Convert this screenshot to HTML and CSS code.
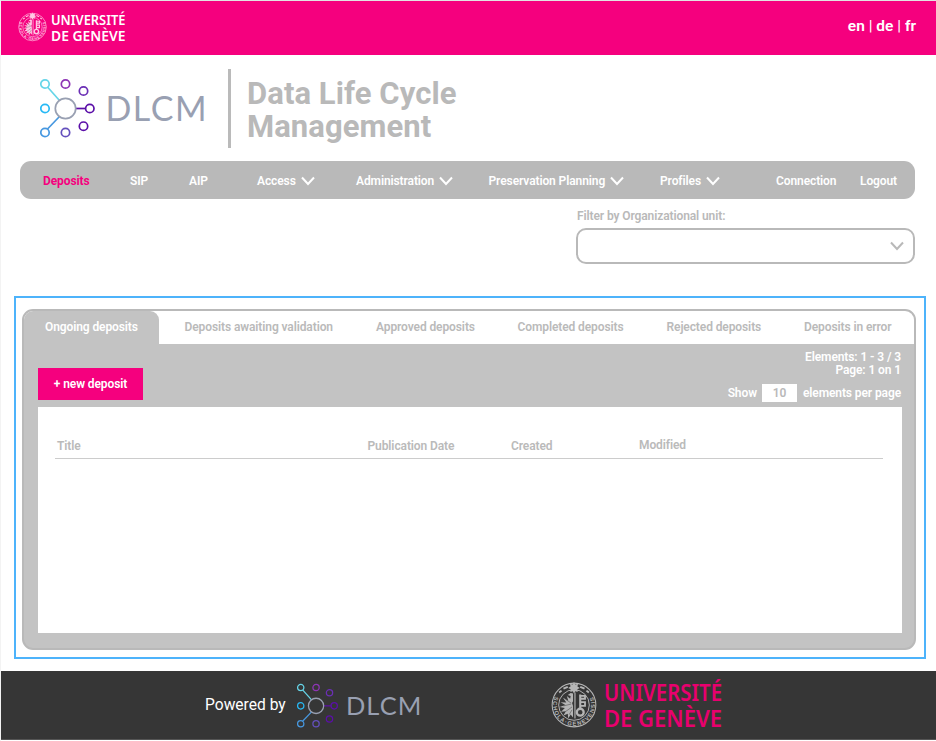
FILE: index.html
```html
<!DOCTYPE html>
<html lang="en">
<head>
<meta charset="utf-8">
<title>Data Life Cycle Management</title>
<link rel="stylesheet" href="styles.css">
</head>
<body>
<svg class="defs" width="0" height="0">
  <defs>
    <symbol id="dlcm" viewBox="0 0 170 60">
      <g fill="none" stroke-width="1.7">
        <path d="M7.500 9 19.500 22.500" stroke="#66d5e8"/>
        <path d="M7.500 51 19.500 38.500" stroke="#4798e0"/>
        <path d="M36 30.500H46" stroke="#5b0fa8"/>
        <circle cx="5" cy="6" r="4.200" stroke="#66d5e8"/>
        <circle cx="25.500" cy="6" r="4.200" stroke="#8e35b5"/>
        <circle cx="43.500" cy="13" r="4.200" stroke="#6b2fb5"/>
        <circle cx="5" cy="30.500" r="4.200" stroke="#27b9f5"/>
        <circle cx="49.800" cy="30.500" r="4.200" stroke="#5b0fa8"/>
        <circle cx="43.500" cy="48.200" r="4.200" stroke="#5b0fa8"/>
        <circle cx="5" cy="54.500" r="4.200" stroke="#4798e0"/>
        <circle cx="25.500" cy="54.500" r="4.200" stroke="#6450bd"/>
        <circle cx="25.500" cy="30.500" r="10.200" stroke="#99a0b2"/>
      </g>
      <text class="dlcm-text" x="65.500" y="43" textLength="102.500" lengthAdjust="spacingAndGlyphs">DLCM</text>
    </symbol>
    <symbol id="seal" viewBox="0 0 48 48">
      <g fill="none" stroke="currentColor">
        <circle cx="24" cy="24" r="22.800" stroke-width="1.100"/>
        <circle cx="24" cy="24" r="16" stroke-width="1"/>
        <path id="ring" d="M3.900 15A21.900 21.900 0 1 0 44.100 15" stroke="none"/>
        <path d="M13 7 17.500 5M30.500 5l4.500 2M8.500 11l2.500-2M37 9l2.500 2" stroke-width="2"/>
      </g>
      <path fill="currentColor" d="M24 0l1.300 2.500 2.900-.8-.6 2.900 2.500 1.600-2.600 1.300.3 3-2.500-.9L24 12l-1.300-2.400-2.500.9.3-3-2.600-1.300 2.500-1.600-.6-2.900 2.900.8z"/>
      <path fill="currentColor" d="M23 12v8l-1 2 1 3v12l-2.500-3-2.500 4-.5-5-4.500 2 2.500-4.500-5 .5 4-4-5.500-1 6-2-5-3 6 .5-3.500-5 5.500 3-1.500-5 3.500 3 .5-3-3-1 3-2z"/>
      <g fill="none" stroke="currentColor">
        <path d="M25 11V38" stroke-width="1.200"/>
        <path d="M30.500 13V29" stroke-width="2.200"/>
        <path d="M30 14.500h5.500v3H31M31 21h4.500v4H31" stroke-width="1.900"/>
        <circle cx="30.500" cy="31.500" r="3.600" stroke-width="2.400"/>
      </g>
      <path d="M15 18l6 4M13 25l8-2M15 31l7-5M19 34l3-5" class="seal-cut"/>
      <text class="seal-text" textLength="86"><textPath href="#ring">SCHOLA·GENEVENSIS</textPath></text>
    </symbol>
    <symbol id="chevron" viewBox="0 0 14 10"><path d="M1 1.500 7 8l6-6.500" fill="none" stroke="currentColor" stroke-width="2"/></symbol>
  </defs>
</svg>
<div class="page">
  <header class="topbar">
    <svg class="seal-small"><use href="#seal"/></svg>
    <svg class="uni-small" viewBox="0 0 120 50" preserveAspectRatio="none">
      <text x="0" y="21" textLength="119" lengthAdjust="spacingAndGlyphs">UNIVERSITÉ</text>
      <text x="0" y="47" textLength="119" lengthAdjust="spacingAndGlyphs">DE GENÈVE</text>
    </svg>
    <div class="langs"><b>en</b> | <b>de</b> | <b>fr</b></div>
  </header>

  <div class="brand">
    <svg class="dlcm-logo"><use href="#dlcm"/></svg>
    <div class="rule"></div>
    <h1>Data Life Cycle<br>Management</h1>
  </div>

  <nav class="nav">
    <a class="current">Deposits</a><a>SIP</a><a>AIP</a>
    <a>Access<svg><use href="#chevron"/></svg></a>
    <a>Administration<svg><use href="#chevron"/></svg></a>
    <a>Preservation Planning<svg><use href="#chevron"/></svg></a>
    <a>Profiles<svg><use href="#chevron"/></svg></a>
    <a>Connection</a><a>Logout</a>
  </nav>

  <div class="filter">
    <label>Filter by Organizational unit:</label>
    <div class="select"><svg><use href="#chevron"/></svg></div>
  </div>

  <main class="frame">
    <section class="panel">
      <div class="tabs">
        <div class="tab-active">Ongoing deposits</div>
        <div class="tab-rest">
          <span>Deposits awaiting validation</span><span>Approved deposits</span><span>Completed deposits</span><span>Rejected deposits</span><span>Deposits in error</span>
        </div>
      </div>
      <div class="toolbar">
        <button>+ new deposit</button>
        <div class="paging">
          <div class="count">Elements: 1 - 3 / 3<br>Page: 1 on 1</div>
          <div class="size"><span>Show</span><span class="num">10</span><span>elements per page</span></div>
        </div>
      </div>
      <div class="table">
        <div class="thead"><span>Title</span><span>Publication Date</span><span>Created</span><span class="modified">Modified</span></div>
      </div>
    </section>
  </main>

  <footer class="footer">
    <span class="powered">Powered by</span>
    <svg class="dlcm-foot"><use href="#dlcm"/></svg>
    <svg class="seal-foot"><use href="#seal"/></svg>
    <svg class="uni-foot" viewBox="0 0 120 50">
      <text x="0" y="21" textLength="119" lengthAdjust="spacingAndGlyphs">UNIVERSITÉ</text>
      <text x="0" y="47" textLength="119" lengthAdjust="spacingAndGlyphs">DE GENÈVE</text>
    </svg>
  </footer>
</div>
</body>
</html>
```
FILE: styles.css
```css
* { box-sizing: border-box; }
body { margin: 0; background: #fff; font-family: Roboto, "Liberation Sans", sans-serif; }
svg { display: block; flex: none; overflow: visible; }
.defs { height: 0; }
.page { width: 936px; height: 741px; overflow: hidden; display: flex; flex-direction: column; border-left: 1px solid #f3f3f3; border-top: 1px solid #e2e2e2; background: #fff; }

.topbar { height: 54px; flex: none; background: #f5007e; color: #fff; display: flex; align-items: flex-start; padding: 0 20px 0 16.500px; }
.seal-small { width: 29px; height: 30px; margin-top: 11px; color: #ffc9e4; }
.uni-small { width: 75px; height: 31px; margin: 11px 0 0 4px; fill: #fff; }
.uni-small text, .uni-foot text { font: 600 23.5px "Noto Sans", sans-serif; }
.langs { margin: 16px 0 0 auto; font-size: 15.500px; line-height: 19px; }
.langs b { font-weight: 600; }

.brand { height: 106px; flex: none; display: flex; align-items: flex-start; padding: 14px 0 0 38.5px; }
.dlcm-logo { width: 170px; height: 60px; margin-top: 9px; }
.dlcm-text { font: 400 34px Lato, sans-serif; letter-spacing: 1.500px; fill: #99a0b2; }
.rule { width: 3px; height: 79px; margin-left: 18.5px; background: #bababa; }
h1 { margin: 8px 0 0 16px; font-size: 31px; line-height: 33px; font-weight: 700; letter-spacing: .07px; color: #b9b9b9; white-space: nowrap; }

.nav { width: 895px; height: 38px; flex: none; margin-left: 19px; padding: 1px 0 0 23px; border-radius: 11px; background: #b9b9b9; color: #fff; display: grid; grid-template-columns: 87px 59px 68px 99px 132.5px 171.5px 116px 84px 1fr; align-items: center; font-size: 12px; letter-spacing: -.1px; font-weight: 600; white-space: nowrap; }
.nav a { display: flex; align-items: center; }
.nav svg { width: 14px; height: 10px; margin-left: 5px; }
.nav .current { color: #f5007e; font-weight: 700; }

.filter { flex: none; width: 339px; height: 97px; margin-left: 575px; padding-top: 9px; color: #b9b9b9; font-size: 12px; letter-spacing: -.1px; font-weight: 600; }
.filter label { display: block; line-height: 16px; margin-left: 1px; }
.select { height: 36px; margin-top: 4px; border: 2px solid #b9b9b9; border-radius: 10px; display: flex; align-items: center; justify-content: flex-end; padding-right: 9px; }
.select svg { width: 14px; height: 10px; }

.frame { flex: none; width: 912px; height: 363px; margin-left: 13px; padding: 11px 8px 8px 6px; border: 2px solid #4db3fb; }
.panel { height: 341px; border: 2px solid #b9b9b9; border-radius: 11px; background: #c3c3c3; overflow: hidden; font-size: 12px; letter-spacing: -.1px; font-weight: 600; color: #fff; }
.tabs { height: 33px; display: flex; background: #fff; line-height: 32px; white-space: nowrap; }
.tab-active { width: 135px; padding-left: 21px; background: #c3c3c3; border-radius: 0 9px 0 0; }
.tab-rest { flex: 1; color: #bababa; display: grid; grid-template-columns: 191.5px 141.5px 149px 137.5px 1fr; padding-left: 25.5px; }
.toolbar { height: 63px; display: flex; justify-content: space-between; padding: 0 13px 0 14px; }
button { width: 105px; height: 32px; margin-top: 24px; border: 0; padding: 0; background: #f5007e; color: #fff; font: 600 12px Roboto, sans-serif; letter-spacing: -.1px; }
.paging { text-align: right; }
.count { padding-top: 7px; line-height: 12.5px; }
.size { display: flex; justify-content: flex-end; margin-top: 8px; line-height: 18px; }
.num { width: 35px; height: 18px; margin: 0 6px 0 5px; background: #fff; color: #b9b9b9; text-align: center; }
.table { height: 226px; margin: 0 12px 0 14px; background: #fff; padding: 30px 19px 0 17px; }
.thead { height: 22px; line-height: 18px; padding-left: 2px; border-bottom: 1px solid #ccc; color: #bababa; display: grid; grid-template-columns: 310.5px 143.5px 128px 1fr; }
.modified { margin-top: -1px; }

.footer { flex: none; height: 69px; margin-top: 12px; background: #363636; color: #fff; display: flex; align-items: flex-start; padding-left: 204px; border-bottom: 1px solid #555; }
.powered { font-size: 15.600px; line-height: 20px; margin-top: 24px; width: 92px; white-space: nowrap; }
.dlcm-foot { width: 127px; height: 45px; margin-top: 12px; }
.seal-foot { width: 46px; height: 48px; margin: 10px 0 0 127px; color: #b5b5b5; }
.uni-foot { width: 119px; height: 50px; margin: 9px 0 0 6.500px; fill: #e8006e; }
.seal-text { font: 700 6px "Liberation Sans", sans-serif; fill: currentColor; }
.seal-cut { fill: none; stroke: #363636; stroke-width: .8; opacity: .6; }
```
